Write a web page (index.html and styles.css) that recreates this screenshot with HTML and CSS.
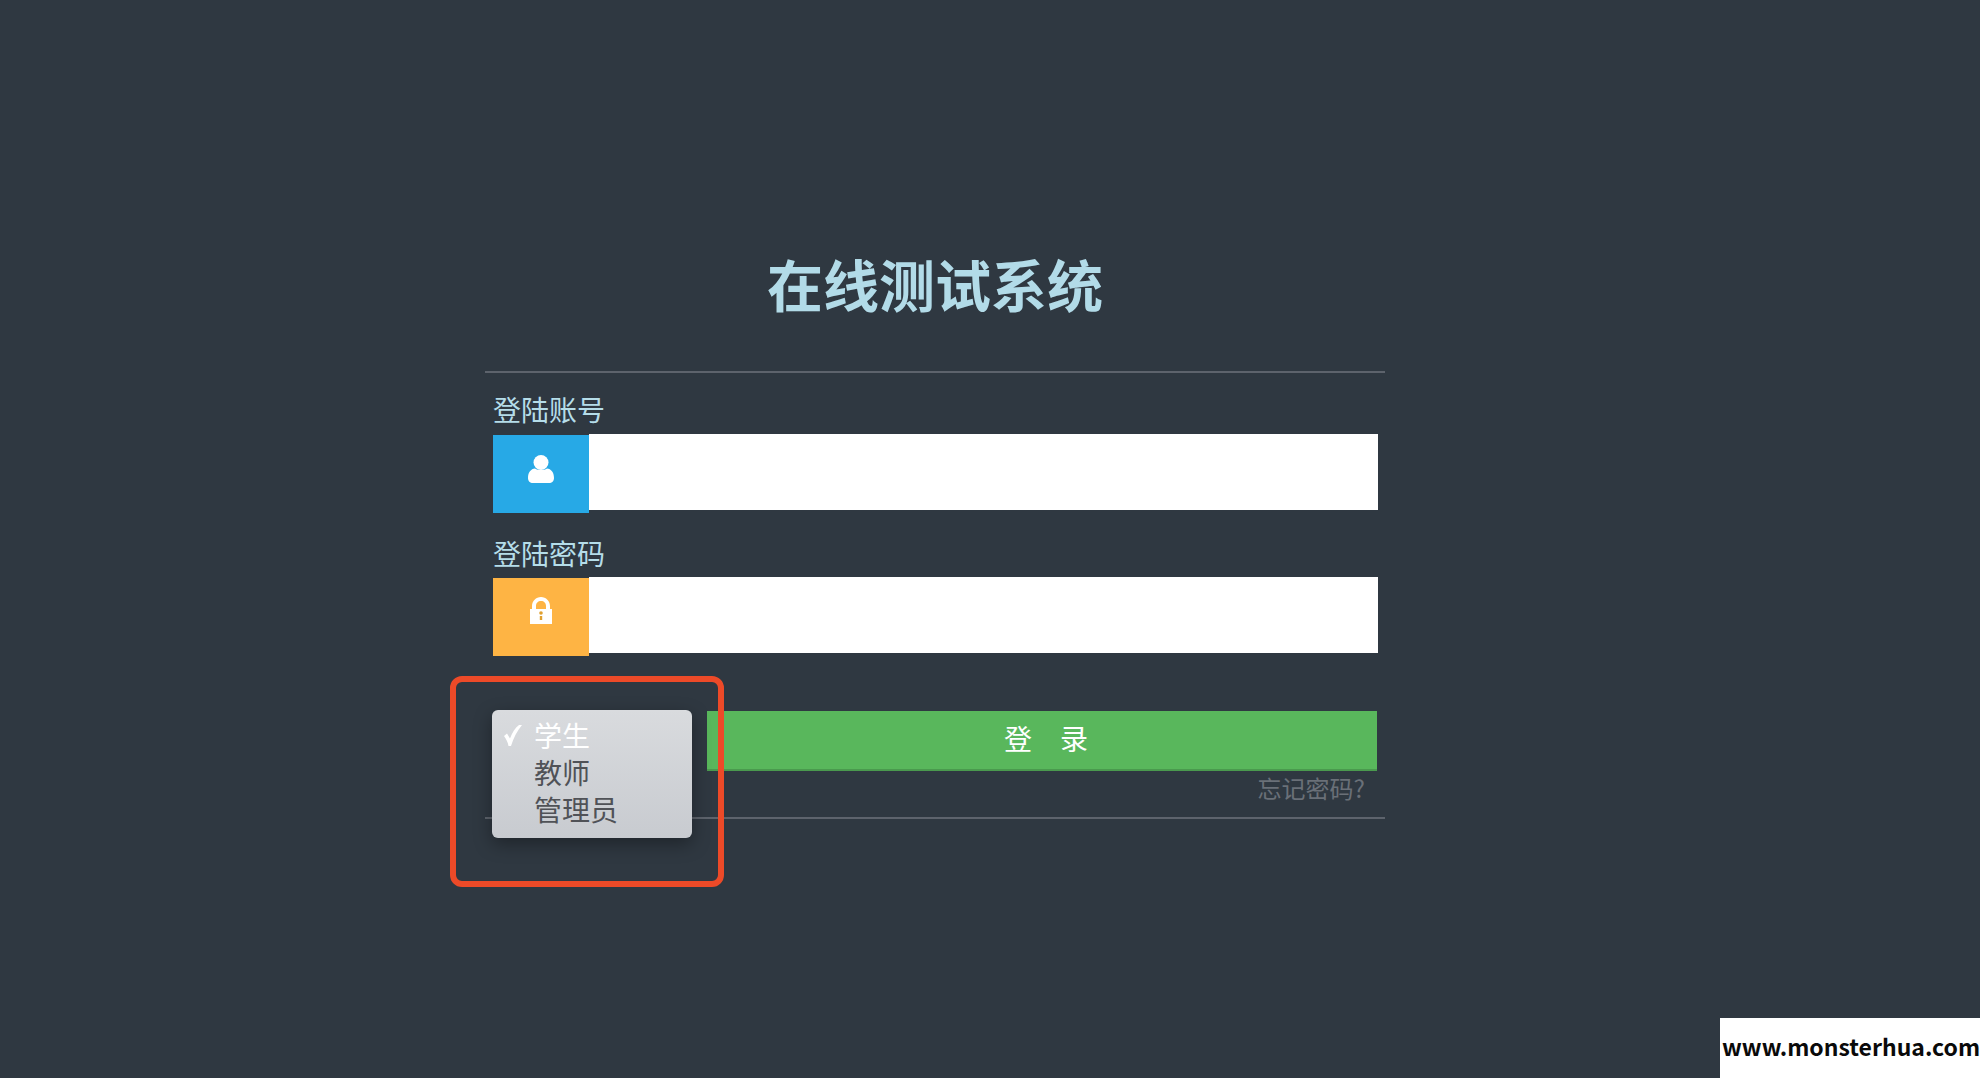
FILE: index.html
```html
<!DOCTYPE html>
<html lang="zh-CN">
<head>
  <meta charset="UTF-8">
  <title>在线测试系统</title>
  <link rel="stylesheet" href="styles.css">
</head>
<body>
  <div class="panel">
    <h1>在线测试系统</h1>
    <form class="login">
      <label class="field-label">登陆账号</label>
      <div class="field">
        <span class="addon addon-blue">
          <svg width="28" height="30" viewBox="0 0 28 30"><circle cx="14" cy="8.5" r="7.5" fill="#fff"/><path d="M1 24c0-6 3-9 7-9.500 3 2 9 2 12 0 4 .5 7 3.500 7 9.500 0 3-2 5-5 5H6c-3 0-5-2-5-5z" fill="#fff"/></svg>
        </span>
        <input class="text-input text-input-first" type="text">
      </div>
      <label class="field-label field-label-next">登陆密码</label>
      <div class="field">
        <span class="addon addon-orange">
          <svg width="24" height="28" viewBox="0 0 24 28"><path fill-rule="evenodd" d="M1 27V12h2V9c0-5 4-9 9-9s9 4 9 9v3h2v15zM7 12h10V9c0-3-2-5-5-5S7 6 7 9z" fill="#fff"/><circle cx="12" cy="16" r="1.800" fill="#e0a030"/><rect x="10.800" y="19" width="2.400" height="4" fill="#e0a030"/></svg>
        </span>
        <input class="text-input" type="text">
      </div>
      <div class="actions">
        <div class="select-slot"></div>
        <button class="submit" type="button">登　录</button>
      </div>
      <a class="forgot">忘记密码?</a>
    </form>
  </div>

  <div class="menu">
    <div class="menu-item menu-item-on">
      <svg class="check" width="18" height="21" viewBox="0 0 18 21"><path d="M0 11l3-2.500 3 5C8 8 11 3 15 0h3C13 6 9.500 13 7 21H4.500C4 17 2 14 0 11z" fill="#fff"/></svg>
      学生
    </div>
    <div class="menu-item">教师</div>
    <div class="menu-item">管理员</div>
  </div>
  <div class="callout"></div>
  <div class="watermark">www.monsterhua.com</div>
</body>
</html>
```

FILE: styles.css
```css
html, body {
  height: 100%;
}
body {
  margin: 0;
  background: #2f3841;
  font-family: "Noto Sans CJK SC", "Liberation Sans", sans-serif;
  overflow: hidden;
}
.panel {
  width: 900px;
  margin-left: 485px;
  padding-top: 241px;
}
h1 {
  margin: 0;
  height: 130px;
  border-bottom: 2px solid #5d636c;
  text-align: center;
  font-size: 56px;
  line-height: 84px;
  font-weight: 700;
  color: #b2dbe8;
}
.login {
  padding: 0 7px 0 8px;
  height: 446px;
  border-bottom: 2px solid #5d636c;
  box-sizing: border-box;
}
.field-label {
  display: block;
  height: 60px;
  padding-top: 15px;
  box-sizing: border-box;
  font-size: 28px;
  line-height: 42px;
  color: #b5dde9;
}
.field-label-next {
  height: 66px;
  padding-top: 21px;
}
.field {
  display: flex;
  align-items: flex-start;
  height: 78px;
}
.addon {
  width: 96px;
  height: 78px;
  margin-top: 2px;
  flex: none;
  display: flex;
  justify-content: center;
  padding-top: 19px;
  box-sizing: border-box;
}
.addon-blue {
  background: #27a9e6;
}
.addon-orange {
  margin-top: 1px;
  padding-top: 19px;
  background: #feb444;
}
.text-input {
  flex: 1;
  height: 76px;
  border: 0;
  padding: 0;
  background: #fff;
}
.text-input-first {
  margin-top: 1px;
}
.actions {
  display: flex;
  gap: 14px;
  margin: 56px 1px 0 0;
}
.select-slot {
  width: 200px;
  flex: none;
}
.submit {
  flex: 1;
  height: 60px;
  border: 0;
  border-bottom: 2px solid #4a9a4e;
  padding: 0 0 4px 8px;
  background: #59b75c;
  color: #fff;
  font-family: inherit;
  font-size: 28px;
}
.forgot {
  display: block;
  margin-top: -1px;
  padding-right: 13px;
  text-align: right;
  font-size: 24px;
  line-height: 36px;
  color: #6a7078;
}
.menu {
  position: absolute;
  left: 492px;
  top: 710px;
  width: 200px;
  height: 128px;
  padding-top: 7px;
  box-sizing: border-box;
  border-radius: 6px;
  background: linear-gradient(#d9dbde, #c8cbd0);
  box-shadow: 0 6px 18px rgba(0,0,0,0.35);
}
.menu-item {
  position: relative;
  height: 37px;
  padding-left: 42px;
  font-size: 28px;
  line-height: 37px;
  color: #505257;
}
.menu-item-on {
  color: #fff;
}
.check {
  position: absolute;
  left: 12px;
  top: 8px;
}
.callout {
  position: absolute;
  left: 450px;
  top: 676px;
  width: 274px;
  height: 211px;
  box-sizing: border-box;
  border: 6px solid #ed4a28;
  border-radius: 12px;
}
.watermark {
  position: absolute;
  right: 0;
  bottom: 0;
  width: 260px;
  height: 60px;
  background: #fff;
  color: #0a0a0a;
  font-family: "Noto Sans CJK SC", "Noto Sans", sans-serif;
  font-size: 23px;
  font-weight: 700;
  line-height: 56px;
  white-space: nowrap;
  padding-left: 2px;
  box-sizing: border-box;
}
```
